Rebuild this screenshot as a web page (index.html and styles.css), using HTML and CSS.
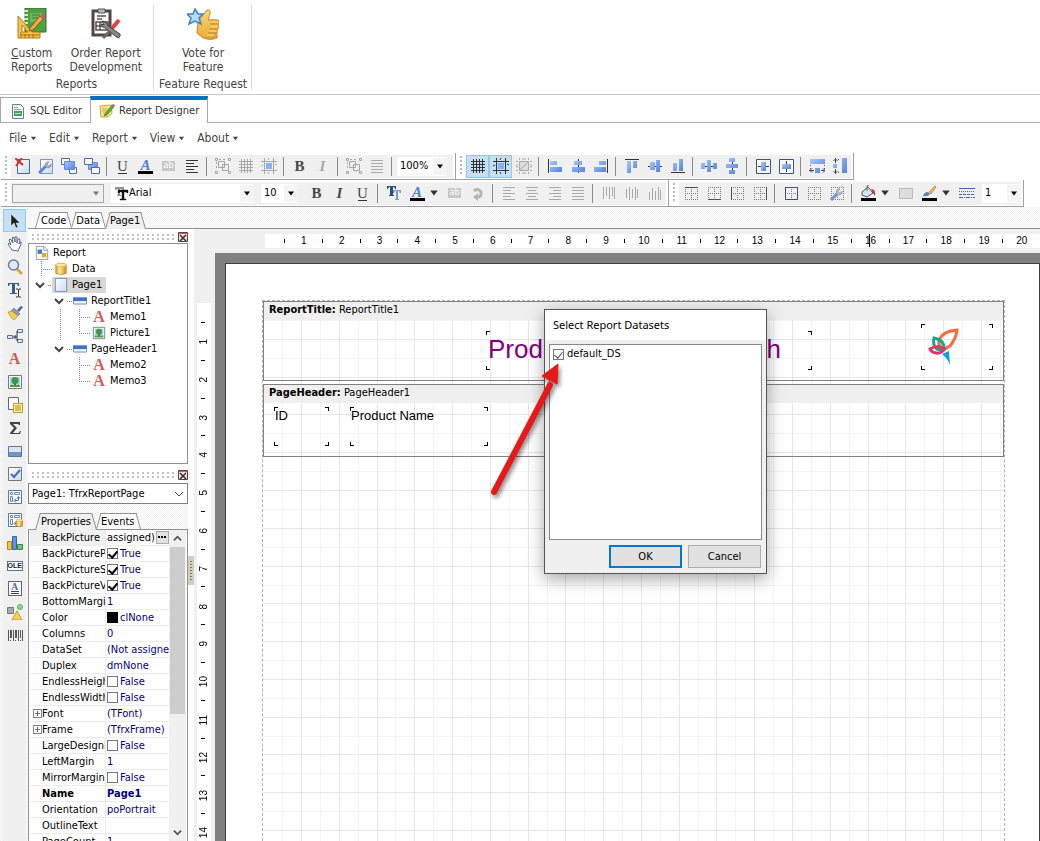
FILE: index.html
```html
<!DOCTYPE html>
<html lang="en">
<head>
<meta charset="utf-8">
<title>Report Designer</title>
<link rel="stylesheet" href="styles.css">
</head>
<body>
<svg class="defs" aria-hidden="true">
  <defs>
    <linearGradient id="blue" x1="0" y1="0" x2="1" y2="1"><stop offset="0" stop-color="#a9c8fb"/><stop offset="1" stop-color="#5380dc"/></linearGradient>
    <linearGradient id="pale" x1="0" y1="0" x2="1" y2="1"><stop offset="0" stop-color="#fff"/><stop offset="1" stop-color="#c9dbf3"/></linearGradient>
    <linearGradient id="gold" x1="0" y1="0" x2="1" y2="0"><stop offset="0" stop-color="#d99a1c"/><stop offset=".35" stop-color="#ffe9a0"/><stop offset="1" stop-color="#d08c10"/></linearGradient>
    <linearGradient id="hand" x1="0" y1="0" x2="0" y2="1"><stop offset="0" stop-color="#ffd873"/><stop offset="1" stop-color="#e9a63a"/></linearGradient>
  </defs>
  <symbol id="i-delete" viewBox="0 0 16 16"><path d="M2.500 1.500h12v14h-12z" fill="url(#pale)" stroke="#51688c"/><path d="M0 0l8 7M7 0L1 8" stroke="#e0301e" stroke-width="2" fill="none"/></symbol>
  <symbol id="i-setup" viewBox="0 0 16 16"><path d="M2.500 1.500h12v14h-12z" fill="url(#pale)" stroke="#7f97bd"/><path d="M1 15l7-7" stroke="#5b86d6" stroke-width="3"/><path d="M8 9a3 3 0 0 1 0-4 3 3 0 0 1 3-1L9 6l1 2 2 0 1-2a3 3 0 0 1-5 3z" fill="#b5bac4" stroke="#7b8290" stroke-width=".7"/></symbol>
  <symbol id="i-front" viewBox="0 0 16 16"><path d="M.5.500h8v6h-8zM8.500 9.500h7v6h-7z" fill="#fff" stroke="#4a6ba6"/><path d="M3.500 3.500h10v8h-10z" fill="url(#blue)" stroke="#5f8be0"/></symbol>
  <symbol id="i-back" viewBox="0 0 16 16"><path d="M4.500 4.500h9v7h-9z" fill="url(#blue)" stroke="#5f8be0"/><path d="M.5.500h8v6h-8zM7.500 9.500h8v6h-8z" fill="#fff" stroke="#4a6ba6"/></symbol>
  <symbol id="i-left" viewBox="0 0 16 16"><path d="M2 2h12v1H2zM2 5h8v1H2zM2 8h12v1H2zM2 11h8v1H2zM2 14h12v1H2z" fill="currentColor"/></symbol>
  <symbol id="i-center" viewBox="0 0 16 16"><path d="M2 2h12v1H2zM4 5h8v1H4zM2 8h12v1H2zM4 11h8v1H4zM2 14h12v1H2z" fill="currentColor"/></symbol>
  <symbol id="i-right" viewBox="0 0 16 16"><path d="M2 2h12v1H2zM6 5h8v1H6zM2 8h12v1H2zM6 11h8v1H6zM2 14h12v1H2z" fill="currentColor"/></symbol>
  <symbol id="i-full" viewBox="0 0 16 16"><path d="M2 2h12v1H2zM2 5h12v1H2zM2 8h12v1H2zM2 11h12v1H2zM2 14h12v1H2z" fill="currentColor"/></symbol>
  <symbol id="i-group" viewBox="0 0 16 16" fill="none" stroke="#a5a5a5"><path d="M.5.500h2v2h-2zM13.500.500h2v2h-2zM.5 13.500h2v2h-2zM13.500 13.500h2v2h-2zM3.500 3.500h6v6h-6zM7.500 6.500h6v6h-6z"/><path d="M4 1.500h8M1.500 4v8" stroke-dasharray="2 2"/></symbol>
  <symbol id="i-grid" viewBox="0 0 16 16"><path d="M3 1h1v14H3zM6 1h1v14H6zM9 1h1v14H9zM12 1h1v14h-1zM1 3h14v1H1zM1 6h14v1H1zM1 9h14v1H1zM1 12h14v1H1z" fill="currentColor"/></symbol>
  <symbol id="i-snap" viewBox="0 0 16 16"><path d="M3 0h1v16H3zM12 0h1v16h-1zM0 3h16v1H0zM0 12h16v1H0z" fill="currentColor"/><path d="M5 5h6v6H5z" class="snap-fill"/><path d="M0 8l2-1M8 0l-1 2M14 6l2 1M7 14l1 2" stroke="currentColor"/></symbol>
  <symbol id="i-fit" viewBox="0 0 16 16"><path d="M3.500 3.500h9v9h-9z" fill="#ddd" stroke="#aaa"/><path d="M4 12l8-8M0 3.500h2M14 3.500h2M0 12.500h2M14 12.500h2M3.500 0v2M12.500 0v2M3.500 14v2M12.500 14v2M6 1h4M6 15h4M1 6v4M15 6v4" stroke="#aaa"/></symbol>
  <symbol id="i-al" viewBox="0 0 16 16"><path d="M1 1h1v14H1z" fill="#333"/><path d="M3 3h7v4H3zM3 9h12v5H3z" fill="url(#blue)"/></symbol>
  <symbol id="i-ac" viewBox="0 0 16 16"><path d="M8 1h1v14H8z" fill="#333"/><path d="M4 3h8v4H4zM2 9h13v5H2z" fill="url(#blue)"/></symbol>
  <symbol id="i-ar" viewBox="0 0 16 16"><path d="M14 1h1v14h-1z" fill="#333"/><path d="M6 3h7v4H6zM1 9h12v5H1z" fill="url(#blue)"/></symbol>
  <symbol id="i-at" viewBox="0 0 16 16"><path d="M1 1h14v1H1z" fill="#333"/><path d="M3 3h4v12H3zM9 3h4v7H9z" fill="url(#blue)"/></symbol>
  <symbol id="i-am" viewBox="0 0 16 16"><path d="M1 8h14v1H1z" fill="#333"/><path d="M3 4h5v8H3zM9 2h4v12H9z" fill="url(#blue)"/></symbol>
  <symbol id="i-ao" viewBox="0 0 16 16"><path d="M1 14h14v1H1z" fill="#333"/><path d="M3 5h4v8H3zM9 1h4v12H9z" fill="url(#blue)"/></symbol>
  <symbol id="i-sh" viewBox="0 0 16 16"><path d="M3 8h11v1H3z" fill="#333"/><path d="M0 5h4v6H0zM6 2h4v12H6zM12 5h4v6h-4z" fill="url(#blue)"/></symbol>
  <symbol id="i-sv" viewBox="0 0 16 16"><path d="M8 3h1v11H8z" fill="#333"/><path d="M5 0h6v4H5zM2 6h12v4H2zM5 12h6v4H5z" fill="url(#blue)"/></symbol>
  <symbol id="i-ch" viewBox="0 0 16 16"><path d="M1.500 1.500h14v14h-14z" fill="#fff" stroke="#3f5470"/><path d="M3 8h11v1H3z" fill="#333"/><path d="M6 4h5v9H6z" fill="url(#blue)"/></symbol>
  <symbol id="i-cv" viewBox="0 0 16 16"><path d="M1.500 1.500h14v14h-14z" fill="#fff" stroke="#3f5470"/><path d="M8 3h1v11H8z" fill="#333"/><path d="M4 6h9v5H4z" fill="url(#blue)"/></symbol>
  <symbol id="i-sw" viewBox="0 0 16 16"><path d="M1 1h15v5H1zM6 10h5v5H6z" fill="url(#blue)"/><path d="M1.500 7v6M15.500 7v6" stroke="#555" stroke-dasharray="1 2"/><path d="M0 12.500h5M3 10.500l-2 2 2 2M16 12.500h-4M14 10.500l2 2-2 2" stroke="#444" fill="none"/></symbol>
  <symbol id="i-hh" viewBox="0 0 16 16"><path d="M10 0h5v15h-5zM1 6h4v4H1z" fill="url(#blue)"/><path d="M3 1.500h6M3 14.500h6" stroke="#555" stroke-dasharray="1 2"/><path d="M3.500 0v5M1.500 3l2-2 2 2M3.500 16v-5M1.500 13l2 2 2-2" stroke="#444" fill="none"/></symbol>
  <symbol id="i-font" viewBox="0 0 16 16"><path d="M2 2h9v3h-1l-1-1H7v6h1v1H4v-1h1V4H4L3 5H2z" fill="#909090"/><path d="M5 5h10v3h-1l-1-1h-2v7h2v1H7v-1h2V7H7L6 8H5z" fill="#111" stroke="#111" stroke-width=".4"/></symbol>
  <symbol id="i-tt" viewBox="0 0 16 16"><path d="M1 1h9v3H9L8 2H7v8h1v1H3v-1h1V2H3L2 4H1z" fill="#2e4d78"/><path d="M7 5h8v3h-1l-1-2h-1v8h1v1H9v-1h1V6H9L8 8H7z" fill="#7a9dd0"/></symbol>
  <symbol id="i-rot" viewBox="0 0 16 16"><path d="M4 6a4 4 0 1 1 5 6H7" fill="none" stroke="#b4b4b4" stroke-width="3"/><path d="M8 8v8l-5-4z" fill="#b4b4b4"/></symbol>
  <symbol id="i-vt" viewBox="0 0 16 16"><path d="M2 2h1v12H2zM5 2h1v9H5zM8 2h1v12H8zM11 2h1v9h-1zM13 2h1v12h-1z" fill="#aaa"/></symbol>
  <symbol id="i-vm" viewBox="0 0 16 16"><path d="M2 4h1v9H2zM5 2h1v13H5zM8 4h1v9H8zM11 2h1v13h-1zM13 4h1v9h-1z" fill="#aaa"/></symbol>
  <symbol id="i-vb" viewBox="0 0 16 16"><path d="M2 7h1v8H2zM5 3h1v12H5zM8 6h1v9H8zM11 2h1v13h-1zM13 5h1v10h-1z" fill="#aaa"/></symbol>
  <symbol id="i-dots" viewBox="0 0 16 16"><path d="M2 2.500h13M2 8.500h13M2 14.500h13M2.500 2v13M8.500 2v13M14.500 2v13" stroke="#777" stroke-dasharray="1 1"/></symbol>
  <symbol id="i-wrench" viewBox="0 0 16 16"><path d="M2 15l6-6" stroke="#6d93dc" stroke-width="3"/><path d="M8 9a3 3 0 0 1 0-4 3 3 0 0 1 3-1L9 6l1 2 2 0 1-2a3 3 0 0 1-5 3z" fill="#c5c5c5" stroke="#888" stroke-width=".7"/></symbol>
  <symbol id="i-bucket" viewBox="0 0 16 16"><path d="M2 7l6-5 5 6-6 4-5-2z" fill="#d7e6f7" stroke="#456"/><path d="M7 6V1l2-1" stroke="#666" fill="none"/><path d="M11 4q5 0 4 7l-2-3z" fill="#d22"/><path d="M1 13h15v3H1z" fill="#000"/></symbol>
  <symbol id="i-box" viewBox="0 0 16 16"><path d="M1.500 3.500h13v10h-13z" fill="#ddd" stroke="#bbb"/></symbol>
  <symbol id="i-pen" viewBox="0 0 16 16"><path d="M8 7l6-6 1 1-5 7z" fill="#efb64a" stroke="#a87420" stroke-width=".6"/><path d="M2 11q1-4 5-4l2 2q-2 3-7 2z" fill="#5c83b8"/><path d="M1 13h15v3H1z" fill="#000"/></symbol>
  <symbol id="i-style" viewBox="0 0 16 16"><path d="M0 3h16v1H0z" fill="#3d62a8"/><path d="M0 6.500h16" stroke="#3d62a8" stroke-dasharray="1 1"/><path d="M0 9.500h16" stroke="#3d62a8" stroke-dasharray="3 1"/><path d="M0 12.500h16" stroke="#3d62a8" stroke-dasharray="4 1 1 1"/></symbol>
  <symbol id="i-down" viewBox="0 0 8 8"><path d="M1 2h6L4 6z" fill="currentColor"/></symbol>
  <symbol id="i-chev" viewBox="0 0 10 10"><path d="M1 3l4 4 4-4" fill="none" stroke="currentColor" stroke-width="2"/></symbol>
  <symbol id="i-cursor" viewBox="0 0 16 16"><path d="M4 1v12l3-3 2 5 2-1-2-4h4z" fill="#222" stroke="#fff" stroke-width=".4"/></symbol>
  <symbol id="i-hand" viewBox="0 0 16 16"><path d="M5 14L1 8q1-2 3 1L2 4q1-2 2 0l2 3-1-5q1-2 2 0l1 4 0-5q2-1 2 1v5l1-4q2-1 2 1l-1 4 1-2q2 0 1 2l-3 7z" fill="#fff" stroke="#51688c"/></symbol>
  <symbol id="i-lens" viewBox="0 0 16 16"><path d="M10 10l5 5" stroke="#e0a53b" stroke-width="3"/><circle cx="6.500" cy="6" r="5" fill="#dceafc" stroke="#6d7f98" stroke-width="1.500"/></symbol>
  <symbol id="i-text" viewBox="0 0 16 16"><path d="M1 1h11v3h-1l-1-2H8v9h2v1H3v-1h2V2H3L2 4H1z" fill="#2f6090"/><path d="M9 7h2M12 7h2M9 15h2M12 15h2M11.500 7v8" stroke="#333"/></symbol>
  <symbol id="i-brush" viewBox="0 0 16 16"><path d="M10 5l4-4 2 1-4 5z" fill="#4a6690"/><path d="M7 3l6 6-3 2-6-5z" fill="#8d9bbb" stroke="#4f5f80" stroke-width=".6"/><path d="M1 7l4-1 6 5-4 4q-4-3-6-8z" fill="#f4cf52" stroke="#a88020" stroke-width=".6"/></symbol>
  <symbol id="i-conn" viewBox="0 0 16 16"><path d="M.5 7.500h5v3h-5zM10.500 1.500h5v3h-5zM10.500 11.500h5v3h-5z" fill="#dce8fa" stroke="#5574a0"/><path d="M6 9h4M8 7v4M10 3v10" stroke="#333" fill="none"/></symbol>
  <symbol id="i-pic" viewBox="0 0 16 16"><path d="M1.500 1.500h13v13h-13z" fill="#fff" stroke="#777"/><path d="M3 3h10v10H3z" fill="#a9d1f0"/><circle cx="8" cy="6.500" r="3.500" fill="#3b9a44"/><path d="M7 9h2v3H7z" fill="#875a2a"/><path d="M3 11h10v2H3z" fill="#48a043"/></symbol>
  <symbol id="i-sub" viewBox="0 0 16 16"><path d="M1.500.500h10v12h-10z" fill="#fff" stroke="#667"/><path d="M6.500 6.500h9v9h-9z" fill="#fdf29a" stroke="#b59a2c"/><path d="M8 9h6M8 11h6M8 13h6" stroke="#a98c20"/></symbol>
  <symbol id="i-sum" viewBox="0 0 16 16"><path d="M3 2h10v3h-1l-1-1H6l4 4-4 5h6l1-2h1l-1 3H3v-1l4-5-4-4z" fill="#444"/></symbol>
  <symbol id="i-band" viewBox="0 0 16 16"><path d="M1.500 3.500h13v10h-13z" fill="#d7e5f6" stroke="#5876a5"/><path d="M2 9h12v4H2z" fill="#6f94c8"/></symbol>
  <symbol id="i-check" viewBox="0 0 16 16"><path d="M1.500 1.500h13v13h-13z" fill="url(#pale)" stroke="#777"/><path d="M4 8l3 3 6-7" fill="none" stroke="#486cb8" stroke-width="2"/></symbol>
  <symbol id="i-cross" viewBox="0 0 16 16"><path d="M1.500 1.500h13v13h-13z" fill="#fff" stroke="#5a789f"/><path d="M3.500 3.500h2v2h-2zM3.500 7.500h2v5h-2zM7.500 3.500h5v2h-5z" fill="none" stroke="#6888b5"/><path d="M8 11.500h3.500V8M9 9.500l-2 2 2 2M10 9.500l1.500-2 1.500 2" fill="none" stroke="#4a6aa0"/></symbol>
  <symbol id="i-db" viewBox="0 0 16 16"><path d="M2 3v10q6 3 12 0V3q-6-3-12 0z" fill="url(#gold)" stroke="#b97d18" stroke-width=".7"/><ellipse cx="8" cy="3.300" rx="6" ry="2" fill="#ffe7a0" stroke="#c99024" stroke-width=".5"/></symbol>
  <symbol id="i-chart" viewBox="0 0 16 16"><path d="M.5 6.500h4v8h-4z" fill="#f4c340" stroke="#b88718"/><path d="M5.500 1.500h4v13h-4z" fill="#5c95e8" stroke="#3565b0"/><path d="M10.500 9.500h5v5h-5z" fill="#74c676" stroke="#368a3c"/></symbol>
  <symbol id="i-shape" viewBox="0 0 16 16"><path d="M.5 3.500h6v6h-6z" fill="#aaa" stroke="#777"/><circle cx="13" cy="3" r="2.500" fill="#8fd6a0" stroke="#54a868"/><path d="M10 7l5 9H5z" fill="#f8d05c" stroke="#c7982a"/></symbol>
  <symbol id="i-bar" viewBox="0 0 16 16"><path d="M1 3h1v11H1zM3 3h2v8H3zM6 3h1v11H6zM8 3h2v8H8zM11 3h1v11h-1zM13 3h1v8h-1zM15 3h1v11h-1zM3 13h1v1H3zM8 13h1v1H8zM13 13h1v1h-1z" fill="#555"/></symbol>
  <symbol id="i-report" viewBox="0 0 16 16"><path d="M1.500.500h9l4 4v11h-13z" fill="#fff" stroke="#7b93b8"/><path d="M10 1v4h4" fill="none" stroke="#7b93b8"/><path d="M3 4h5v5H3z" fill="#3f7fc8"/><path d="M8 8h5v5H8z" fill="#f0a51e"/></symbol>
  <symbol id="i-page" viewBox="0 0 16 16"><path d="M1.500.500h13v15h-13z" fill="url(#pale)" stroke="#7088ac"/></symbol>
  <symbol id="i-tband" viewBox="0 0 16 16"><path d="M.5 4.500h15v7H.5z" fill="#e4eefb" stroke="#6e8fc6"/><path d="M0 4h16v4H0z" fill="#4373c4"/></symbol>
  <symbol id="i-close" viewBox="0 0 10 10"><path d="M.5.500h9v9h-9z" fill="#f6dede" stroke="#5c4045"/><path d="M2 3l6 6M8 3L2 9" stroke="#333" stroke-width="1.500"/><path d="M1 1h8v1H1z" fill="#c86068"/></symbol>
</svg>

<header class="ribbon">
  <section class="group">
    <div class="actions">
      <button class="action"><svg viewBox="0 0 32 32"><path d="M9 0h21v24H9z" fill="#4f9f43" stroke="#2c6b27"/><path d="M14 5h12v9H14z" fill="#6db75f"/><path d="M16 7h8M16 10h8" stroke="#3b7f34"/><path d="M8 3h4M8 7h4M8 11h4M8 15h4" stroke="#deded2" stroke-width="2"/><path d="M2 8v22h22v-6H16z M6 17v7h6z" fill="#f4c34a" fill-rule="evenodd" stroke="#b57b16"/><path d="M4 27h19M5 24v6M9 26v4M13 26v4M17 26v4" stroke="#a87018"/><path d="M14 20L24 8l3 3-10 11-4 1z" fill="#f6ab3b" stroke="#8b5620"/><path d="M24 8l2-2q3 0 3 3l-2 2z" fill="#d4566a"/></svg><span><u>C</u>ustom<br>Reports</span></button>
      <button class="action"><svg viewBox="0 0 32 32"><path d="M3 3h17v24H3z" fill="#fff" stroke="#514640" stroke-width="3"/><path d="M8 1h7v4H8z" fill="#bbb" stroke="#555"/><path d="M7 8h9M7 11h5M6 14h12v8H6zM6 18h12M10 14v8" stroke="#5a5049" fill="none" stroke-width="1.500"/><path d="M20 23l9-11" stroke="#e3463a" stroke-width="4"/><path d="M12 13l4 1 2 4 12 8q1 3-2 4L15 20q-4-1-4-4l3 1z" fill="#8a8a8a" stroke="#444"/><path d="M13 30l7-7" stroke="#666" stroke-width="3"/></svg><span>Order Report<br>Development</span></button>
    </div>
    <h2>Reports</h2>
  </section>
  <section class="group">
    <div class="actions">
      <button class="action"><svg viewBox="0 0 32 32"><path d="M11 14l9-12q4-1 3 4l-2 6h9v18q-6 3-14 0l-6-5z" fill="url(#hand)" stroke="#c98b2b"/><path d="M21 12h10q2 2 0 4h-8M23 16h8q2 2 0 5h-8M22 21h8q1 3-1 4h-7M21 25h7q1 3-1 4h-8" fill="#f9c65f" stroke="#c98b2b"/><path d="M8 1l3 5 5 0-4 4 2 6-6-3-6 3 2-6-4-4h6z" fill="#b6dcfa" stroke="#3c83c4" stroke-width="1.500"/></svg><span>Vote for<br>Feature</span></button>
    </div>
    <h2>Feature Request</h2>
  </section>
</header>

<nav class="doc-tabs">
  <button class="doc-tab"><svg viewBox="0 0 16 16"><path d="M2.500 1.500h8l3 3v11h-11z" fill="#fff" stroke="#5a80a0"/><path d="M4 8h8v5H4z" fill="#49a05c"/><path d="M5 10.500h6" stroke="#bfe2c6"/><path d="M4 4.500h4M4 6.500h7" stroke="#8aa6bd"/></svg>SQL Editor</button>
  <button class="doc-tab active"><svg viewBox="0 0 16 16"><path d="M1 3l11-1 1 8-4 4-7 0z" fill="#f9e88a" stroke="#c7a43a"/><path d="M3 6h6M3 8h6M4 10h4" stroke="#c7a850"/><path d="M6 11l7-9 2 2-7 8-3 1z" fill="#4faf3b" stroke="#2b7a22" stroke-width=".6"/><path d="M13 2l1-1 2 1-1 2z" fill="#e05050"/></svg>Report Designer</button>
</nav>

<nav class="menu">
  <button>File<svg><use href="#i-down"/></svg></button>
  <button>Edit<svg><use href="#i-down"/></svg></button>
  <button>Report<svg><use href="#i-down"/></svg></button>
  <button>View<svg><use href="#i-down"/></svg></button>
  <button>About<svg><use href="#i-down"/></svg></button>
</nav>

<div class="toolrow">
  <div class="toolbar">
    <i class="grip"></i>
    <div class="tools">
      <button class="tool" aria-label="Delete page"><svg><use href="#i-delete"/></svg></button>
      <button class="tool" aria-label="Page settings"><svg><use href="#i-setup"/></svg></button>
      <button class="tool" aria-label="Bring to front"><svg><use href="#i-front"/></svg></button>
      <button class="tool" aria-label="Send to back"><svg><use href="#i-back"/></svg></button>
      <i class="sep"></i>
      <button class="tool glyph under" aria-label="Underline">U</button>
      <button class="tool glyph ink" aria-label="Font color">A</button>
      <button class="tool" aria-label="Highlight"><span class="ab">ab</span></button>
      <button class="tool" aria-label="Align text"><svg><use href="#i-left"/></svg></button>
      <i class="sep"></i>
      <button class="tool dim" aria-label="Group"><svg><use href="#i-group"/></svg></button>
      <button class="tool dim" aria-label="Grid"><svg><use href="#i-grid"/></svg></button>
      <button class="tool dim" aria-label="Snap"><svg><use href="#i-snap"/></svg></button>
      <i class="sep"></i>
      <button class="tool glyph bold" aria-label="Bold">B</button>
      <button class="tool glyph slant dim" aria-label="Italic">I</button>
      <i class="sep"></i>
      <button class="tool dim" aria-label="Ungroup"><svg><use href="#i-group"/></svg></button>
      <button class="tool dim" aria-label="Lines"><svg><use href="#i-full"/></svg></button>
      <i class="sep"></i>
      <label class="combo zoom"><select aria-label="Zoom"><option>100%</option></select><svg><use href="#i-down"/></svg></label>
    </div>
  </div>
  <div class="toolbar">
    <i class="grip"></i>
    <div class="tools">
      <button class="tool on" aria-label="Show grid"><svg><use href="#i-grid"/></svg></button>
      <button class="tool on" aria-label="Snap to grid"><svg><use href="#i-snap"/></svg></button>
      <button class="tool" aria-label="Fit to grid"><svg><use href="#i-fit"/></svg></button>
      <i class="sep"></i>
      <button class="tool" aria-label="Align lefts"><svg><use href="#i-al"/></svg></button>
      <button class="tool" aria-label="Align centers"><svg><use href="#i-ac"/></svg></button>
      <button class="tool" aria-label="Align rights"><svg><use href="#i-ar"/></svg></button>
      <i class="sep"></i>
      <button class="tool" aria-label="Align tops"><svg><use href="#i-at"/></svg></button>
      <button class="tool" aria-label="Align middles"><svg><use href="#i-am"/></svg></button>
      <button class="tool" aria-label="Align bottoms"><svg><use href="#i-ao"/></svg></button>
      <i class="sep"></i>
      <button class="tool" aria-label="Space horizontally"><svg><use href="#i-sh"/></svg></button>
      <button class="tool" aria-label="Space vertically"><svg><use href="#i-sv"/></svg></button>
      <i class="sep"></i>
      <button class="tool" aria-label="Center horizontally"><svg><use href="#i-ch"/></svg></button>
      <button class="tool" aria-label="Center vertically"><svg><use href="#i-cv"/></svg></button>
      <i class="sep"></i>
      <button class="tool" aria-label="Same width"><svg><use href="#i-sw"/></svg></button>
      <button class="tool" aria-label="Same height"><svg><use href="#i-hh"/></svg></button>
    </div>
  </div>
</div>
<div class="toolrow">
  <div class="toolbar">
    <i class="grip"></i>
    <div class="tools wide">
      <label class="combo style"><select aria-label="Style"><option></option></select><svg><use href="#i-down"/></svg></label>
      <label class="combo face"><svg class="tool-icon"><use href="#i-font"/></svg><select aria-label="Font"><option>Arial</option></select><svg><use href="#i-down"/></svg></label>
      <label class="combo size"><select aria-label="Font size"><option>10</option></select><svg><use href="#i-down"/></svg></label>
      <div class="tools">
        <button class="tool glyph bold" aria-label="Bold">B</button>
        <button class="tool glyph slant" aria-label="Italic">I</button>
        <button class="tool glyph under" aria-label="Underline">U</button>
        <i class="sep"></i>
        <button class="tool" aria-label="Font settings"><svg><use href="#i-tt"/></svg></button>
        <button class="tool split" aria-label="Font color"><span class="glyph ink">A</span><svg class="drop"><use href="#i-down"/></svg></button>
        <button class="tool" aria-label="Highlight"><span class="ab">ab</span></button>
        <button class="tool" aria-label="Rotate"><svg><use href="#i-rot"/></svg></button>
        <i class="sep"></i>
        <button class="tool dim" aria-label="Align left"><svg><use href="#i-left"/></svg></button>
        <button class="tool dim" aria-label="Align center"><svg><use href="#i-center"/></svg></button>
        <button class="tool dim" aria-label="Align right"><svg><use href="#i-right"/></svg></button>
        <button class="tool dim" aria-label="Justify"><svg><use href="#i-full"/></svg></button>
        <i class="sep"></i>
        <button class="tool" aria-label="Top"><svg><use href="#i-vt"/></svg></button>
        <button class="tool" aria-label="Middle"><svg><use href="#i-vm"/></svg></button>
        <button class="tool" aria-label="Bottom"><svg><use href="#i-vb"/></svg></button>
      </div>
    </div>
  </div>
  <div class="toolbar">
    <i class="grip"></i>
    <div class="tools">
      <button class="tool" aria-label="Top line"><svg viewBox="0 0 16 16"><use href="#i-dots"/><path d="M2 2h13v1H2z" fill="#3f5470"/></svg></button>
      <button class="tool" aria-label="Bottom line"><svg viewBox="0 0 16 16"><use href="#i-dots"/><path d="M2 14h13v1H2z" fill="#3f5470"/></svg></button>
      <button class="tool" aria-label="Left line"><svg viewBox="0 0 16 16"><use href="#i-dots"/><path d="M2 2h1v13H2z" fill="#3f5470"/></svg></button>
      <button class="tool" aria-label="Right line"><svg viewBox="0 0 16 16"><use href="#i-dots"/><path d="M14 2h1v13h-1z" fill="#3f5470"/></svg></button>
      <i class="sep"></i>
      <button class="tool" aria-label="All lines"><svg viewBox="0 0 16 16"><use href="#i-dots"/><path d="M2.500 2.500h12v12h-12z" fill="none" stroke="#3f5470"/></svg></button>
      <button class="tool" aria-label="No lines"><svg><use href="#i-dots"/></svg></button>
      <button class="tool" aria-label="Edit frame"><svg viewBox="0 0 16 16"><use href="#i-dots"/><use href="#i-wrench"/></svg></button>
      <i class="sep"></i>
      <button class="tool split" aria-label="Fill color"><svg><use href="#i-bucket"/></svg><svg class="drop"><use href="#i-down"/></svg></button>
      <button class="tool" aria-label="Fill settings"><svg><use href="#i-box"/></svg></button>
      <button class="tool split" aria-label="Line color"><svg><use href="#i-pen"/></svg><svg class="drop"><use href="#i-down"/></svg></button>
      <button class="tool" aria-label="Line style"><svg><use href="#i-style"/></svg></button>
      <label class="combo line"><select aria-label="Line width"><option>1</option></select><svg><use href="#i-down"/></svg></label>
    </div>
  </div>
</div>

<main class="designer">
  <div class="palette">
    <button class="tool on" aria-label="Select"><svg><use href="#i-cursor"/></svg></button>
    <button class="tool" aria-label="Hand"><svg><use href="#i-hand"/></svg></button>
    <button class="tool" aria-label="Zoom"><svg><use href="#i-lens"/></svg></button>
    <button class="tool" aria-label="Edit text"><svg><use href="#i-text"/></svg></button>
    <button class="tool" aria-label="Copy format"><svg><use href="#i-brush"/></svg></button>
    <button class="tool" aria-label="Insert band"><svg><use href="#i-conn"/></svg></button>
    <button class="tool glyph red" aria-label="Text">A</button>
    <button class="tool" aria-label="Picture"><svg><use href="#i-pic"/></svg></button>
    <button class="tool" aria-label="Subreport"><svg><use href="#i-sub"/></svg></button>
    <button class="tool" aria-label="System text"><svg><use href="#i-sum"/></svg></button>
    <button class="tool" aria-label="Gradient"><svg><use href="#i-band"/></svg></button>
    <button class="tool" aria-label="Check box"><svg><use href="#i-check"/></svg></button>
    <button class="tool" aria-label="Cross-tab"><svg><use href="#i-cross"/></svg></button>
    <button class="tool" aria-label="DB cross-tab"><svg viewBox="0 0 16 16"><use href="#i-cross"/><use href="#i-db" x="8" y="6" width="9" height="10"/></svg></button>
    <button class="tool" aria-label="Chart"><svg><use href="#i-chart"/></svg></button>
    <button class="tool" aria-label="OLE object"><span class="ole">OLE</span></button>
    <button class="tool" aria-label="Rich text"><span class="rich">A</span></button>
    <button class="tool" aria-label="Draw"><svg><use href="#i-shape"/></svg></button>
    <button class="tool" aria-label="Barcode"><svg><use href="#i-bar"/></svg></button>
  </div>

  <div class="work">
    <nav class="tabs">
      <button class="tab"><span>Code</span></button>
      <button class="tab"><span>Data</span></button>
      <button class="tab active"><span>Page1</span></button>
    </nav>
    <div class="panes">
      <aside class="side">
        <div class="panel-bar"><i></i><button aria-label="Close report tree"><svg><use href="#i-close"/></svg></button></div>
        <div class="tree">
          <ul>
            <li><div class="node"><svg><use href="#i-report"/></svg>Report</div>
              <ul>
                <li><div class="node"><i class="link long"></i><svg><use href="#i-db"/></svg>Data</div></li>
                <li><div class="node"><svg class="chev"><use href="#i-chev"/></svg><i class="link"></i><span class="picked"><svg><use href="#i-page"/></svg>Page1</span></div>
                  <ul class="bare">
                    <li class="trunk"><div class="node"><svg class="chev"><use href="#i-chev"/></svg><i class="link"></i><svg><use href="#i-tband"/></svg>ReportTitle1</div>
                      <ul>
                        <li><div class="node"><i class="link long"></i><span class="glyph red">A</span>Memo1</div></li>
                        <li><div class="node"><i class="link long"></i><svg><use href="#i-pic"/></svg>Picture1</div></li>
                      </ul></li>
                    <li><div class="node"><svg class="chev"><use href="#i-chev"/></svg><i class="link"></i><svg><use href="#i-tband"/></svg>PageHeader1</div>
                      <ul>
                        <li><div class="node"><i class="link long"></i><span class="glyph red">A</span>Memo2</div></li>
                        <li><div class="node"><i class="link long"></i><span class="glyph red">A</span>Memo3</div></li>
                      </ul></li>
                  </ul></li>
              </ul></li>
          </ul>
        </div>
        <div class="panel-bar"><i></i><button aria-label="Close inspector"><svg><use href="#i-close"/></svg></button></div>
        <label class="object"><select aria-label="Object"><option>Page1: TfrxReportPage</option></select><svg viewBox="0 0 10 10"><path d="M1 3l4 4 4-4" fill="none" stroke="#444"/></svg></label>
        <nav class="tabs">
          <button class="tab active"><span>Properties</span></button>
          <button class="tab"><span>Events</span></button>
        </nav>
        <div class="props">
          <div class="prop-view">
            <table>
              <tr class="current"><th>BackPicture</th><td><div class="edit"><span>assigned)</span><button aria-label="Edit"><svg viewBox="0 0 9 3"><path d="M0 0h2v2H0zM3 0h2v2H3zM6 0h2v2H6z"/></svg></button></div></td></tr>
              <tr><th>BackPicturePrintable</th><td><label><input type="checkbox" checked>True</label></td></tr>
              <tr><th>BackPictureStretched</th><td><label><input type="checkbox" checked>True</label></td></tr>
              <tr><th>BackPictureVisible</th><td><label><input type="checkbox" checked>True</label></td></tr>
              <tr><th>BottomMargin</th><td>1</td></tr>
              <tr><th>Color</th><td><span class="color"><i class="swatch"></i>clNone</span></td></tr>
              <tr><th>Columns</th><td>0</td></tr>
              <tr><th>DataSet</th><td>(Not assigned)</td></tr>
              <tr><th>Duplex</th><td>dmNone</td></tr>
              <tr><th>EndlessHeight</th><td><label><input type="checkbox">False</label></td></tr>
              <tr><th>EndlessWidth</th><td><label><input type="checkbox">False</label></td></tr>
              <tr><th class="expand">Font</th><td>(TFont)</td></tr>
              <tr><th class="expand">Frame</th><td>(TfrxFrame)</td></tr>
              <tr><th>LargeDesignHeight</th><td><label><input type="checkbox">False</label></td></tr>
              <tr><th>LeftMargin</th><td>1</td></tr>
              <tr><th>MirrorMargins</th><td><label><input type="checkbox">False</label></td></tr>
              <tr class="strong"><th>Name</th><td>Page1</td></tr>
              <tr><th>Orientation</th><td>poPortrait</td></tr>
              <tr><th>OutlineText</th><td></td></tr>
              <tr><th>PageCount</th><td>1</td></tr>
            </table>
          </div>
          <div class="scroll"><svg class="up"><use href="#i-chev"/></svg><i></i><svg><use href="#i-chev"/></svg></div>
        </div>
      </aside>
      <div class="splitter"><i></i></div>
      <section class="canvas">
        <div class="ruler-x">
          <ol><li>1</li><li>2</li><li>3</li><li>4</li><li>5</li><li>6</li><li>7</li><li>8</li><li>9</li><li>10</li><li>11</li><li>12</li><li>13</li><li>14</li><li>15</li><li>16<i class="pointer"></i></li><li>17</li><li>18</li><li>19</li><li>20</li></ol>
        </div>
        <div class="ruler-y">
          <ol><li><b>1</b></li><li><b>2</b></li><li><b>3</b></li><li><b>4</b></li><li><b>5</b></li><li><b>6</b></li><li><b>7</b></li><li><b>8</b></li><li><b>9</b></li><li><b>10</b></li><li><b>11</b></li><li><b>12</b></li><li><b>13</b></li><li><b>14</b></li></ol>
        </div>
        <div class="desk">
          <div class="paper">
            <div class="margins">
              <svg class="lines" aria-hidden="true">
                <path fill="#f4f4f4" d="M19 0h1v999h-1zM57 0h1v999h-1zM95 0h1v999h-1zM132 0h1v999h-1zM170 0h1v999h-1zM208 0h1v999h-1zM246 0h1v999h-1zM284 0h1v999h-1zM321 0h1v999h-1zM359 0h1v999h-1zM397 0h1v999h-1zM435 0h1v999h-1zM472 0h1v999h-1zM510 0h1v999h-1zM548 0h1v999h-1zM586 0h1v999h-1zM624 0h1v999h-1zM661 0h1v999h-1zM699 0h1v999h-1zM737 0h1v999h-1zM0 19h999v1h-999zM0 57h999v1h-999zM0 95h999v1h-999zM0 132h999v1h-999zM0 170h999v1h-999zM0 208h999v1h-999zM0 246h999v1h-999zM0 284h999v1h-999zM0 321h999v1h-999zM0 359h999v1h-999zM0 397h999v1h-999zM0 435h999v1h-999zM0 472h999v1h-999zM0 510h999v1h-999z"/>
                <path fill="#e6e6e6" d="M38 0h1v999h-1zM76 0h1v999h-1zM114 0h1v999h-1zM151 0h1v999h-1zM189 0h1v999h-1zM227 0h1v999h-1zM265 0h1v999h-1zM302 0h1v999h-1zM340 0h1v999h-1zM378 0h1v999h-1zM416 0h1v999h-1zM453 0h1v999h-1zM491 0h1v999h-1zM529 0h1v999h-1zM567 0h1v999h-1zM605 0h1v999h-1zM642 0h1v999h-1zM680 0h1v999h-1zM718 0h1v999h-1zM0 38h999v1h-999zM0 76h999v1h-999zM0 113h999v1h-999zM0 151h999v1h-999zM0 189h999v1h-999zM0 227h999v1h-999zM0 265h999v1h-999zM0 302h999v1h-999zM0 340h999v1h-999zM0 378h999v1h-999zM0 416h999v1h-999zM0 453h999v1h-999zM0 491h999v1h-999zM0 529h999v1h-999z"/>
              </svg>
              <section class="band title">
                <h3><b>ReportTitle:</b> ReportTitle1</h3>
                <div class="memo memo1"><span>Prod</span><span>h</span></div>
                <div class="memo picture"><svg viewBox="0 0 32 40" fill="none" stroke-width="3"><path d="M29 4q-14 1-18 10-1 5 3 9 4 0 8-3 6-7 7-16z" stroke="#ff6a3c"/><path d="M6 12q11 2 10 12-8 1-10-5-1-4 0-7z" stroke="#12a88a"/><path d="M2 23q8-5 14 0-3 5-8 4-5-1-6-4z" stroke="#e8336a"/><path d="M14 28l7-3 1 14q-2-6-8-11z" fill="#0a9fe8"/></svg></div>
              </section>
              <section class="band header">
                <h3><b>PageHeader:</b> PageHeader1</h3>
                <div class="memo memo2">ID</div>
                <div class="memo memo3">Product Name</div>
              </section>
            </div>
          </div>
        </div>
      </section>
    </div>
  </div>
</main>

<dialog open class="dialog" aria-labelledby="dlg-title">
  <h1 id="dlg-title">Select Report Datasets</h1>
  <div class="dialog-body">
    <div class="list"><label><input type="checkbox" checked>default_DS</label></div>
    <div class="buttons"><button class="push default">OK</button><button class="push">Cancel</button></div>
  </div>
</dialog>
<svg class="arrow" viewBox="0 0 90 150" aria-hidden="true"><path d="M14 132L70 25" stroke="#e81818" stroke-width="6" stroke-linecap="round"/><path d="M78 4L62 16l15 8z" fill="#e81818" stroke="#e81818"/></svg>
</body>
</html>
```

FILE: styles.css
```css
* { box-sizing: border-box; }

body {
  margin: 0;
  height: 100vh;
  overflow: hidden;
  display: flex;
  flex-direction: column;
  background: #fff;
  color: #000;
  font: 11px/16px "DejaVu Sans Condensed", "Noto Sans", sans-serif;
  white-space: nowrap;
}

button, select, input {
  font: inherit;
  color: inherit;
  margin: 0;
  padding: 0;
  border: 0;
  background: none;
}

ul, ol { margin: 0; padding: 0; list-style: none; }
h1, h2, h3 { margin: 0; font-size: inherit; font-weight: normal; }
svg { display: block; flex: none; }
i { display: block; flex: none; }
.defs { position: absolute; width: 0; height: 0; }

/* Ribbon */
.ribbon {
  display: flex;
  flex: none;
  border-bottom: 1px solid #c8c8c8;
  color: #444;
  font-size: 12px;
  line-height: 14px;
}
.group {
  padding: 8px 5px 0;
  text-align: center;
  background: linear-gradient(#dadada, #dadada) right 5px / 1px 85px no-repeat;
}
.group:first-child { padding: 8px 12px 0 11px; }
.actions { display: flex; justify-content: center; gap: 17px; }
.action { display: flex; flex-direction: column; align-items: center; gap: 6px; }
.action svg { width: 32px; height: 32px; }
.group h2 { line-height: 20px; }

/* Document tabs */
.doc-tabs {
  display: flex;
  flex: none;
  height: 28px;
  padding-top: 1px;
  align-items: flex-end;
  box-shadow: inset 0 -1px #a8a8a8;
  color: #333;
}
.doc-tab {
  display: flex;
  align-items: center;
  gap: 4px;
  height: 26px;
  padding: 2px 8px 0 9px;
  border: 1px solid #a8a8a8;
  border-right: 0;
}
.doc-tab svg { width: 16px; height: 16px; }
.doc-tab.active {
  height: 27px;
  padding: 0 8px 2px;
  border: 1px solid #a8a8a8;
  border-top: 4px solid #0a70c4;
  border-bottom: 0;
  background: #fff;
}

/* Menu */
.menu {
  display: flex;
  flex: none;
  gap: 12px;
  height: 30px;
  padding-left: 9px;
  color: #444;
  font-size: 12px;
}
.menu button { display: flex; align-items: center; gap: 3px; }
.menu svg { width: 7px; height: 7px; }

/* Toolbars */
.toolrow { display: flex; flex: none; height: 27px; padding-left: 1px; }
.toolbar {
  display: flex;
  align-items: center;
  padding: 0 2px 0 1px;
  border-right: 1px solid #a0a0a0;
  border-bottom: 1px solid #a0a0a0;
}
.grip {
  width: 9px;
  height: 20px;
  background: repeating-linear-gradient(#b8b8b8 0 2px, transparent 2px 4px) 3px 0 / 2px 20px no-repeat;
}
.tools { display: flex; align-items: center; height: 23px; background: #f0f0f0; }
.tool {
  display: flex;
  align-items: center;
  justify-content: center;
  width: 23px;
  height: 23px;
  flex: none;
  color: #333;
}
.tool svg, .tool-icon { width: 16px; height: 16px; }
.tool.on { background: #c5e0f5; border: 1px solid #8fc7f5; }
.tool.split { width: 38px; justify-content: flex-start; padding-left: 4px; gap: 4px; }
.tool .drop { width: 10px; height: 10px; }
.glyph { font: bold 15px/16px "Liberation Serif", serif; text-align: center; color: #484848; }
.glyph.under { font-weight: normal; background: linear-gradient(#333, #333) center 18px / 9px 1px no-repeat; }
.glyph.slant { font-style: italic; }
.glyph.ink {
  color: #4f80d6;
  font-style: italic;
  align-items: flex-start;
  padding-top: 2px;
  background: linear-gradient(#000, #000) center bottom 4px / 15px 3px no-repeat;
}
span.glyph.ink { width: 16px; height: 23px; }
.glyph.red { color: #d15c57; font-size: 16px; }
.tool.dim { color: #a8a8a8; }
.ab { width: 13px; height: 10px; background: #c8c8c8; color: #fff; font-size: 9px; line-height: 9px; text-align: center; }
.ole { width: 16px; border: 1px solid #5574a0; background: #fff; color: #222; font: bold 7px/8px "Liberation Sans", sans-serif; text-align: center; }
.rich {
  width: 14px;
  height: 15px;
  border: 1px solid #666677;
  color: #3b6eb5;
  font: bold 10px/9px "Liberation Serif", serif;
  text-align: center;
  background: linear-gradient(#444, #444) center 9px / 8px 1px no-repeat, linear-gradient(#444, #444) center 11px / 8px 1px no-repeat, #fff;
}
.snap-fill { fill: #86b2f4; }
.dim .snap-fill { fill: #ccc; }
.sep { width: 8px; height: 19px; background: linear-gradient(#8c8c8c, #8c8c8c) 3px 0 / 1px 19px no-repeat; }
.combo { display: flex; align-items: center; height: 19px; background: #fff; }
.combo select { appearance: none; flex: 1; min-width: 0; height: 17px; padding: 0 3px; }
.combo > svg:last-child { width: 14px; height: 17px; padding: 4px 3px; background: #f4f4f4; }
.combo.zoom { width: 50px; margin: 0 6px 0 1px; }
.tools.wide { gap: 7px; padding-left: 1px; }
.combo.style { width: 92px; background: #f0f0f0; border: 1px solid #a8a8a8; color: #777; }
.combo.style > svg:last-child { background: none; }
.combo.face { width: 143px; padding-left: 2px; }
.combo.face select { padding: 0; }
.combo.size { width: 37px; }
.combo.line { width: 39px; margin: 0 0 0 4px; }

/* Work area */
.designer {
  display: flex;
  flex: 1;
  min-height: 0;
  padding: 2px 0 0 3px;
  background: repeating-conic-gradient(#f0f0f0 0 25%, #fff 0 50%) 0 0 / 2px 2px;
}
.palette { width: 23px; flex: none; margin-right: 2px; background: #f0f0f0; }
.work { display: flex; flex-direction: column; flex: 1; min-width: 0; padding-top: 3px; }
.panes { display: flex; flex: 1; min-height: 0; }

.tabs { display: flex; flex: none; height: 17px; padding-left: 8px; border-bottom: 1px solid #909090; }
.tab { position: relative; height: 17px; margin-left: -1px; padding: 0 6px; --fill: #fff; }
.tab + .tab { padding-left: 5px; }
.tab.active { --fill: #f0f0f0; }
.tab::before, .tab::after {
  content: "";
  position: absolute;
  top: 0;
  bottom: 1px;
  width: 60%;
  border-top: 1px solid #909090;
  background: var(--fill);
  transform-origin: bottom;
}
.tab.active::before, .tab.active::after { bottom: 0; }
.tab::before { left: 0; border-left: 1px solid #909090; transform: skewX(-16deg); }
.tab::after { right: 0; border-right: 1px solid #909090; transform: skewX(16deg); }
.tab span { position: relative; z-index: 1; }

/* Side panels */
.side { display: flex; flex-direction: column; width: 160px; flex: none; }
.panel-bar { display: flex; align-items: center; gap: 1px; flex: none; height: 14px; padding-top: 2px; background: #fff; }
.panel-bar i {
  flex: 1;
  height: 6px;
  margin-left: 4px;
  background: conic-gradient(at 2px 2px, transparent 75%, #c2c2c2 0) 0 0 / 5px 4px;
}
.panel-bar svg { width: 10px; height: 10px; }
.tree {
  flex: none;
  height: 221px;
  padding: 1px 6px;
  border: 1px solid #909090;
  background: #fff;
}
.tree + .panel-bar { height: 19px; padding-top: 3px; }
.node { display: flex; align-items: center; height: 16px; }
.node svg { width: 14px; height: 14px; margin-right: 4px; }
.node .glyph { width: 14px; margin-right: 4px; }
.node .chev { width: 10px; height: 10px; margin: 0 3px 0 0; color: #444; }
.link { width: 5px; height: 1px; margin-right: 1px; background: repeating-linear-gradient(90deg, #888 0 1px, transparent 1px 2px); }
.link.long { width: 12px; margin: 0 1px 0 6px; }
.tree li { position: relative; }
.tree ul ul ul { padding-left: 19px; }
.tree ul ul:not(.bare)::before, .trunk::before {
  content: "";
  position: absolute;
  left: 6px;
  top: 16px;
  bottom: 8px;
  width: 1px;
  background: repeating-linear-gradient(#888 0 1px, transparent 1px 2px);
}
.tree > ul > li > ul::before { bottom: auto !important; height: 16px; }
.trunk ul::before, .trunk + li ul::before { left: 25px !important; }
.trunk::before { bottom: 0; }
.picked { display: flex; align-items: center; height: 16px; margin-left: -2px; padding: 0 4px 0 2px; background: #d8d8d8; }

.object { display: flex; align-items: center; flex: none; height: 21px; margin-bottom: 9px; border: 1px solid #808080; background: #fff; }
.object select { appearance: none; flex: 1; min-width: 0; padding: 0 3px; }
.object svg { width: 10px; height: 10px; margin-right: 3px; }

.props {
  display: flex;
  flex: 1;
  min-height: 0;
  padding: 0 1px;
  border: solid #909090;
  border-width: 0 1px;
  background: #fff;
}
.prop-view { flex: 1; min-width: 0; overflow: hidden; }
.props table { width: 100%; table-layout: fixed; border-spacing: 0; }
.props th, .props td { height: 16px; padding: 0; overflow: hidden; line-height: 15px; border-bottom: 1px solid #ececec; }
.props th { width: 76px; padding-left: 12px; text-align: left; font-weight: normal; border-right: 1px solid #ececec; }
.props td { padding-left: 1px; color: #000080; }
.props label, .edit, .color { display: flex; align-items: center; height: 15px; }
.props .current th { background: #f0f0f0; }
.edit { color: #000; justify-content: space-between; }
.edit button { flex: none; width: 13px; height: 13px; padding: 0 1px; border: 1px solid #aaa; background: #e2e2e2; }
.edit svg { width: 9px; height: 3px; }
.props .strong th, .props .strong td { font-weight: bold; }
.props .expand {
  background:
    linear-gradient(#666, #666) 5px 7px / 5px 1px no-repeat,
    linear-gradient(#666, #666) 7px 5px / 1px 5px no-repeat,
    linear-gradient(#fff, #fff) 4px 4px / 7px 7px no-repeat,
    linear-gradient(#888, #888) 3px 3px / 9px 9px no-repeat;
  padding-left: 12px;
}
.swatch { width: 11px; height: 11px; margin-right: 2px; background: #000; }
input[type="checkbox"] {
  appearance: none;
  flex: none;
  display: grid;
  place-items: center;
  width: 11px;
  height: 11px;
  margin-right: 2px;
  border: 1px solid #777;
  background: #fff;
}
input[type="checkbox"]:checked::after {
  content: "";
  width: 4px;
  height: 7px;
  margin-bottom: 2px;
  border: solid #000;
  border-width: 0 2px 2px 0;
  transform: rotate(40deg);
}
.list input[type="checkbox"]:checked::after { border-color: #444; border-width: 0 1px 1px 0; }
.scroll { display: flex; flex-direction: column; align-items: center; width: 17px; flex: none; padding: 4px 1px; background: #f0f0f0; color: #555; }
.scroll svg { width: 9px; height: 9px; }
.scroll .up { transform: rotate(180deg); }
.scroll i { width: 15px; height: 167px; margin: 4px 0 auto; background: #cdcdcd; }

.splitter { display: flex; width: 6px; flex: none; background: #fff; }
.splitter i {
  width: 6px;
  height: 29px;
  margin-top: 327px;
  background: repeating-linear-gradient(#777 0 1px, transparent 1px 3px) 2px 5px / 2px 20px no-repeat, #cfcfba;
}

/* Canvas */
.canvas {
  display: grid;
  grid-template: 24px 1fr / 21px 1fr;
  flex: 1;
  min-width: 0;
  min-height: 0;
  overflow: hidden;
  background: #f0f0f0;
  font: 10px/14px "Liberation Sans", Arial, sans-serif;
}
.ruler-x { grid-column: 1 / -1; height: 14px; margin: 5px 0 0 71px; padding-left: 19px; background: #fff; overflow: hidden; }
.ruler-x ol { display: flex; }
.ruler-x li {
  position: relative;
  width: 1cm;
  padding-left: 2px;
  flex: none;
  text-align: center;
  background: linear-gradient(#000, #000) 0 5px / 1px 4px no-repeat;
}
.pointer { position: absolute; left: 18px; top: 0; width: 1px; height: 13px; background: #000; }
.ruler-y { width: 14px; margin: 50px 0 0 3px; padding-top: 19px; background: #fff; overflow: hidden; }
.ruler-y li {
  display: flex;
  align-items: center;
  justify-content: center;
  height: 1cm;
  padding-top: 2px;
  background: linear-gradient(#000, #000) 4px 0 / 4px 1px no-repeat;
}
.ruler-y b { font-weight: normal; writing-mode: vertical-rl; transform: rotate(180deg); }
.desk { min-width: 0; overflow: hidden; padding: 10px 0 0 10px; background: #808080; }
.paper { display: flex; width: 815px; height: 100%; padding: 36px 0 0 36px; border: solid #404040; border-width: 1px 1px 0; background: #fff; }
.margins { position: relative; width: 743px; overflow: hidden; border: dashed #b0b0b0; border-width: 1px 1px 0; font: 11px/16px "DejaVu Sans Condensed", "Noto Sans", sans-serif; }
.lines { position: absolute; inset: 0; width: 100%; height: 100%; }
.band { position: relative; border: 1px solid #808080; }
.band h3 { height: 18px; padding-left: 5px; background: #efefef; }
.title { height: 80px; margin-bottom: 3px; }
.header { height: 73px; }
.memo {
  position: absolute;
  --ink: linear-gradient(#000, #000);
  background:
    var(--ink) left top / 4px 1px, var(--ink) left top / 1px 4px,
    var(--ink) right top / 4px 1px, var(--ink) right top / 1px 4px,
    var(--ink) left bottom / 4px 1px, var(--ink) left bottom / 1px 4px,
    var(--ink) right bottom / 4px 1px, var(--ink) right bottom / 1px 4px;
  background-repeat: no-repeat;
  font: 13px/18px "Liberation Sans", Arial, sans-serif;
}
.memo1 { left: 222px; top: 29px; width: 326px; height: 39px; display: flex; justify-content: space-between; padding: 0 31px 0 2px; color: #800080; font-size: 26px; line-height: 36px; }
.picture { left: 657px; top: 22px; width: 72px; height: 46px; }
.picture svg { width: 32px; height: 40px; margin: 2px 0 0 7px; }
.memo2 { left: 10px; top: 22px; width: 55px; height: 39px; padding-left: 1px; }
.memo3 { left: 86px; top: 22px; width: 138px; height: 39px; padding-left: 1px; }

/* Dialog */
.dialog {
  position: absolute;
  left: 544px;
  top: 309px;
  width: 223px;
  margin: 0;
  padding: 0;
  border: 1px solid #555;
  background: #f0f0f0;
  color: #000;
  box-shadow: 0 5px 16px rgba(0, 0, 0, .35);
}
.dialog h1 { padding: 0 8px; background: #fff; font: 11px/30px "Noto Sans", sans-serif; }
.dialog-body { padding: 4px; }
.list { height: 196px; padding: 1px 3px; border: 1px solid #828790; background: #fff; }
.list label { display: flex; align-items: center; gap: 1px; }
.buttons { display: flex; justify-content: flex-end; gap: 6px; padding: 5px 1px 1px 0; }
.push { width: 73px; height: 23px; border: 1px solid #adadad; background: #e1e1e1; }
.push.default { border: 2px solid #0078d7; }
.arrow {
  position: absolute;
  left: 480px;
  top: 360px;
  width: 90px;
  height: 150px;
  filter: drop-shadow(2px 3px 2px rgba(0, 0, 0, .45));
}
```
